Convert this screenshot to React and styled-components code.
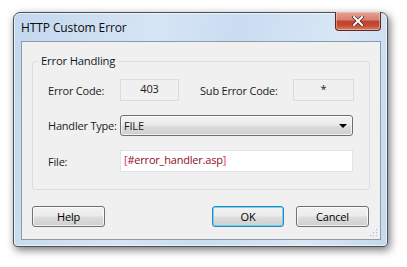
import React from "react"
import styled, { createGlobalStyle } from "styled-components"

const GlobalStyle = createGlobalStyle`
  html, body {
    margin: 0;
    padding: 0;
    background: #ffffff;
  }
  body {
    font-family: "Open Sans", "Noto Sans", sans-serif;
    font-size: 11px;
    letter-spacing: -0.2px;
    color: #1b1b1b;
  }
`;

const Stage = styled.div`
  padding: 12px 0 0 13px;
  width: 407px;
  height: 267px;
  box-sizing: border-box;
`;

const Window = styled.div`
  width: 375px;
  height: 235px;
  box-sizing: border-box;
  border: 1px solid #4a5058;
  border-radius: 7px 7px 4px 4px;
  background: linear-gradient(100deg, #c3d7ee 0%, #d6e5f5 35%, #c9dcf1 55%, #d9e7f6 80%, #c4d8ef 100%);
  box-shadow: 2px 3px 9px rgba(0, 0, 0, 0.55), inset 0 0 0 1px rgba(255, 255, 255, 0.6);
  padding: 0 6px 6px 7px;
  display: flex;
  flex-direction: column;
`;

const TitleBar = styled.div`
  height: 28px;
  display: flex;
  align-items: flex-start;
  justify-content: space-between;
`;

const Title = styled.div`
  padding-top: 6px;
  font-size: 12px;
  letter-spacing: -0.1px;
  color: #0c0c0c;
`;

const CloseButton = styled.div`
  width: 46px;
  height: 19px;
  margin-top: -1px;
  box-sizing: border-box;
  border: 1px solid #5e2820;
  border-top: none;
  border-radius: 0 0 4px 4px;
  background: linear-gradient(#e4a493 0%, #d58070 45%, #c0422c 50%, #c44a33 75%, #d7846a 100%);
  box-shadow: inset 0 0 0 1px rgba(255, 220, 210, 0.45);
  display: flex;
  align-items: center;
  justify-content: center;
`;

const Client = styled.div`
  flex: 1;
  box-sizing: border-box;
  border: 1px solid #8e9aa8;
  background: #f0f0f0;
  padding: 11px 10px 0 10px;
  display: flex;
  flex-direction: column;
  position: relative;
`;

const Group = styled.fieldset`
  margin: 0;
  padding: 10px 0 17px 0;
  border: 1px solid #d5dfe5;
  border-radius: 3px;
`;

const Legend = styled.legend`
  margin-left: 5px;
  padding: 0 3px;
  color: #101828;
  line-height: 16px;
  font-size: 11.3px;
`;

const GroupBody = styled.div`
  padding-left: 15px;
  display: flex;
  flex-direction: column;
  gap: 14px;
`;

const Row = styled.div`
  display: flex;
  align-items: center;
  height: ${p => p.$h || 22}px;
`;

const Label = styled.div`
  width: ${p => p.$w}px;
  padding-left: ${p => p.$pl || 0}px;
  box-sizing: border-box;
  flex: none;
  white-space: nowrap;
`;

const ReadBox = styled.div`
  width: ${p => p.$w}px;
  height: 22px;
  box-sizing: border-box;
  border: 1px solid #dcdcdc;
  background: #f0f0f0;
  text-align: center;
  line-height: 17px;
`;

const Select = styled.div`
  width: 233px;
  height: 21px;
  box-sizing: border-box;
  border: 1px solid #707070;
  border-radius: 3px;
  background: linear-gradient(#f2f2f2 0%, #ebebeb 48%, #dddddd 52%, #cfcfcf 100%);
  box-shadow: inset 0 0 0 1px rgba(255, 255, 255, 0.7);
  display: flex;
  align-items: center;
  justify-content: space-between;
  padding: 0 5px 0 3px;
  line-height: 16px;
`;

const Arrow = styled.div`
  width: 0;
  height: 0;
  border-left: 4px solid transparent;
  border-right: 4px solid transparent;
  border-top: 4px solid #000;
  margin-top: 1px;
`;

const TextInput = styled.div`
  width: 233px;
  height: 22px;
  box-sizing: border-box;
  border: 1px solid #e2e3ea;
  background: #ffffff;
  padding: 0 3px;
  line-height: 17px;
  color: #8e0e1e;
`;

const Bracket = styled.span`
  color: #ec2a3a;
`;

const Buttons = styled.div`
  display: flex;
  align-items: center;
  margin-top: 16px;
`;

const Button = styled.div`
  width: ${p => p.$w || 73}px;
  height: 21px;
  box-sizing: border-box;
  border: 1px solid ${p => (p.$default ? "#3c7fb1" : "#707070")};
  border-radius: 3px;
  background: linear-gradient(#f2f2f2 0%, #ebebeb 48%, #dddddd 52%, #cfcfcf 100%);
  box-shadow: inset 0 0 0 1px ${p => (p.$default ? "rgba(72, 216, 251, 0.85)" : "rgba(255, 255, 255, 0.7)")};
  display: flex;
  align-items: center;
  justify-content: center;
  margin-left: ${p => p.$ml || 0}px;
  color: #000;
`;

const Grip = styled.svg`
  position: absolute;
  right: 2px;
  bottom: 2px;
`;

export default function App() {
  return (
    <>
      <GlobalStyle />
      <Stage>
        <Window>
          <TitleBar>
            <Title>HTTP Custom Error</Title>
            <CloseButton>
              <svg width="12" height="10" viewBox="0 0 12 10">
                <path d="M2 1 L10 9 M10 1 L2 9" stroke="#4d2a24" strokeWidth="3.4" strokeLinecap="square" />
                <path d="M2 1 L10 9 M10 1 L2 9" stroke="#ffffff" strokeWidth="2" strokeLinecap="square" />
              </svg>
            </CloseButton>
          </TitleBar>
          <Client>
            <Group>
              <Legend>Error Handling</Legend>
              <GroupBody>
                <Row>
                  <Label $w={72}>Error Code:</Label>
                  <ReadBox $w={59}>403</ReadBox>
                  <Label $w={114} $pl={21}>Sub Error Code:</Label>
                  <ReadBox $w={61}>*</ReadBox>
                </Row>
                <Row $h={21}>
                  <Label $w={72}>Handler Type:</Label>
                  <Select>
                    <span>FILE</span>
                    <Arrow />
                  </Select>
                </Row>
                <Row>
                  <Label $w={72}>File:</Label>
                  <TextInput>
                    <Bracket>[</Bracket>#error_handler.asp<Bracket>]</Bracket>
                  </TextInput>
                </Row>
              </GroupBody>
            </Group>
            <Buttons>
              <Button>Help</Button>
              <Button $w={72} $ml={107} $default>OK</Button>
              <Button $ml={12}>Cancel</Button>
            </Buttons>
            <Grip width="8" height="8" viewBox="0 0 8 8">
              <rect x="6" y="0" width="1.2" height="1.2" fill="#b8c0c8" />
              <rect x="3" y="3" width="1.2" height="1.2" fill="#b8c0c8" />
              <rect x="6" y="3" width="1.2" height="1.2" fill="#b8c0c8" />
              <rect x="0" y="6" width="1.2" height="1.2" fill="#b8c0c8" />
              <rect x="3" y="6" width="1.2" height="1.2" fill="#b8c0c8" />
              <rect x="6" y="6" width="1.2" height="1.2" fill="#b8c0c8" />
            </Grip>
          </Client>
        </Window>
      </Stage>
    </>
  )
}
